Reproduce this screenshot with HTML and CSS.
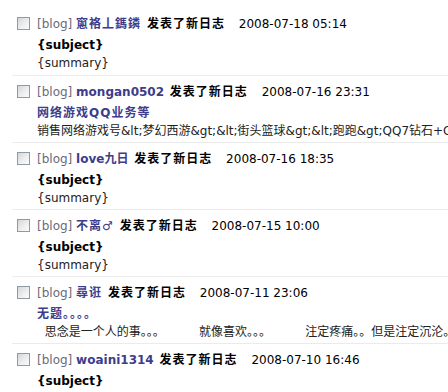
FILE: index.html
```html
<!DOCTYPE html>
<html lang="zh-CN">
<head>
  <meta charset="UTF-8">
  <title>好友动态</title>
  <link rel="stylesheet" href="styles.css">
</head>
<body>
  <ul class="feed">
    <li class="feed-item">
      <div class="head">
        <span class="check"></span>
        <span class="tag">[blog]</span>
        <a class="user cjk" href="#">窻袼丄鎷鏻</a>
        <b class="act">发表了新日志</b>
        <span class="date">2008-07-18 05:14</span>
      </div>
      <div class="subject">{subject}</div>
      <div class="summary">{summary}</div>
    </li>
    <li class="feed-item">
      <div class="head">
        <span class="check"></span>
        <span class="tag">[blog]</span>
        <a class="user" href="#">mongan0502</a>
        <b class="act">发表了新日志</b>
        <span class="date">2008-07-16 23:31</span>
      </div>
      <div class="subject"><a class="cjk" href="#">网络游戏QQ业务等</a></div>
      <div class="summary">销售网络游戏号&amp;lt;梦幻西游&amp;gt;&amp;lt;街头篮球&amp;gt;&amp;lt;跑跑&amp;gt;QQ7钻石+QQ会员</div>
    </li>
    <li class="feed-item">
      <div class="head">
        <span class="check"></span>
        <span class="tag">[blog]</span>
        <a class="user" href="#">love九日</a>
        <b class="act">发表了新日志</b>
        <span class="date">2008-07-16 18:35</span>
      </div>
      <div class="subject">{subject}</div>
      <div class="summary">{summary}</div>
    </li>
    <li class="feed-item">
      <div class="head">
        <span class="check"></span>
        <span class="tag">[blog]</span>
        <a class="user cjk" href="#">不离♂</a>
        <b class="act">发表了新日志</b>
        <span class="date">2008-07-15 10:00</span>
      </div>
      <div class="subject">{subject}</div>
      <div class="summary">{summary}</div>
    </li>
    <li class="feed-item">
      <div class="head">
        <span class="check"></span>
        <span class="tag">[blog]</span>
        <a class="user cjk" href="#">尋诳</a>
        <b class="act">发表了新日志</b>
        <span class="date">2008-07-11 23:06</span>
      </div>
      <div class="subject"><a class="cjk" href="#">无题。。。。</a></div>
      <div class="summary">&nbsp;&nbsp;思念是一个人的事。。。&nbsp;&nbsp;&nbsp;&nbsp;&nbsp;&nbsp;&nbsp;&nbsp;&nbsp;就像喜欢。。。&nbsp;&nbsp;&nbsp;&nbsp;&nbsp;&nbsp;&nbsp;&nbsp;&nbsp;注定疼痛。。但是注定沉沦。。。</div>
    </li>
    <li class="feed-item">
      <div class="head">
        <span class="check"></span>
        <span class="tag">[blog]</span>
        <a class="user" href="#">woaini1314</a>
        <b class="act">发表了新日志</b>
        <span class="date">2008-07-10 16:46</span>
      </div>
      <div class="subject">{subject}</div>
      <div class="summary">{summary}</div>
    </li>
  </ul>
</body>
</html>
```

FILE: styles.css
```css
* { margin: 0; padding: 0; box-sizing: border-box; }
body {
  font-family: "DejaVu Sans", Verdana, "Noto Sans CJK SC", sans-serif;
  font-size: 12px;
  color: #000;
  background-color: #fff;
  overflow: hidden;
}

.feed {
  list-style: none;
  padding: 8px 0 0 12px;
}

.feed-item {
  height: 67px;
  padding: 4px 0 0 25px;
  border-bottom: 1px solid #ebebeb;
  white-space: nowrap;
  overflow: hidden;
}

.feed-item:first-child { height: 68px; }

.head {
  position: relative;
  height: 24px;
  line-height: 24px;
}

.check {
  position: absolute;
  left: -20px;
  top: 5px;
  width: 13px;
  height: 13px;
  border: 1px solid #8e9aa6;
  background: linear-gradient(135deg, #d4d6d8 0%, #eef0f1 60%, #fbfbfb 100%);
}

.tag { color: #6a6a7a; }

.user, .subject a {
  color: #3d3d8c;
  font-weight: bold;
  text-decoration: none;
}

.cjk { letter-spacing: 1px; }

.act {
  margin-left: 2px;
  letter-spacing: 1px;
}

.date { margin-left: 10px; }

.subject, .summary {
  height: 18px;
  line-height: 18px;
  overflow: hidden;
}

.subject { font-weight: bold; }

.summary { color: #222; }
```
